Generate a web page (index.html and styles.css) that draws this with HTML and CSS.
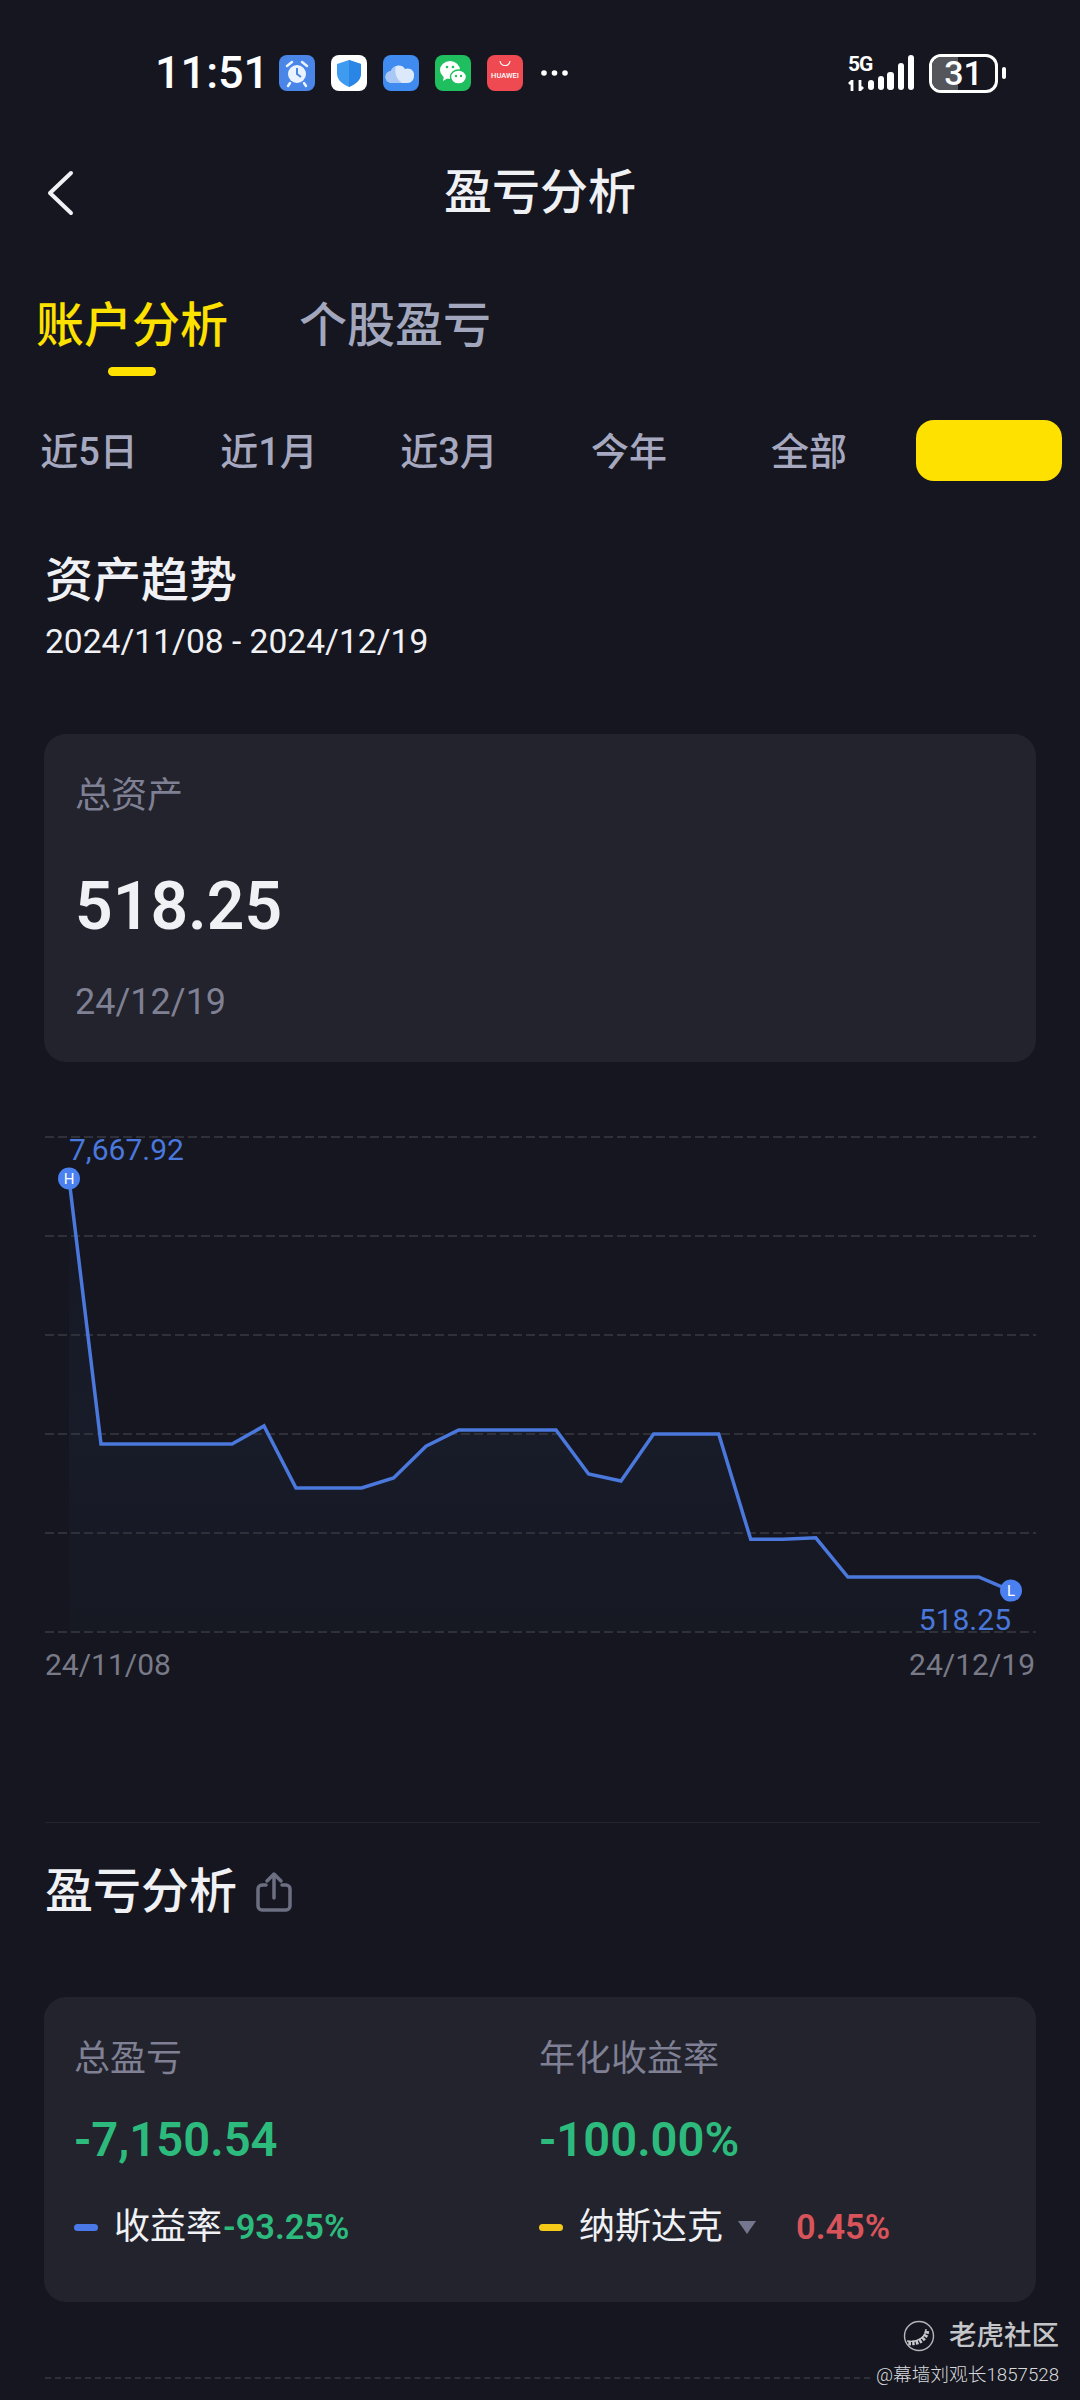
FILE: index.html
```html
<!DOCTYPE html>
<html lang="zh-CN">
<head>
<meta charset="utf-8">
<title>盈亏分析</title>
<link rel="stylesheet" href="styles.css">
</head>
<body>
<div class="page">
  <div class="status">
    <span class="time">11:51</span>
    <div class="notif">
      <svg class="app" viewBox="0 0 36 36"><rect width="36" height="36" rx="8" fill="#4a86e8"/><circle cx="18" cy="19" r="9" fill="#eaf2ff"/><path d="M18 13v6l4 3" fill="none" stroke="#4a86e8" stroke-width="2"/><path d="M8 11l5-4M28 11l-5-4M11 28l-2 3M25 28l2 3" stroke="#eaf2ff" stroke-width="2.5" stroke-linecap="round"/></svg>
      <svg class="app" viewBox="0 0 36 36"><rect width="36" height="36" rx="8" fill="#fff"/><path d="M18 5l12 4v9c0 7-5 11-12 14C11 29 6 25 6 18V9z" fill="#3f9bf0"/><path d="M18 5l12 4v9c0 7-5 11-12 14z" fill="#2a86e6"/></svg>
      <svg class="app" viewBox="0 0 36 36"><rect width="36" height="36" rx="8" fill="#3f8bf0"/><path d="M9 28a6 6 0 0 1-1-12c2-6 11-8 14-2 5-2 10 2 9 7 0 4-3 7-6 7z" fill="#dce9fb"/><path d="M9 28a6 6 0 0 1-1-12c1-3 3-4 5-5-2 6 0 13 6 17z" fill="#a9c8f5"/></svg>
      <svg class="app" viewBox="0 0 36 36"><rect width="36" height="36" rx="8" fill="#1fbf5f"/><ellipse cx="15" cy="15" rx="10" ry="9" fill="#fff"/><path d="M9 21l-1 5 5-3z" fill="#fff"/><ellipse cx="23.500" cy="22" rx="8" ry="7" fill="#fff" stroke="#1fbf5f" stroke-width="1.500"/><circle cx="12" cy="12" r="1.300" fill="#1fbf5f"/><circle cx="18" cy="12" r="1.300" fill="#1fbf5f"/><circle cx="21" cy="21" r="1.200" fill="#1fbf5f"/><circle cx="26" cy="21" r="1.200" fill="#1fbf5f"/></svg>
      <svg class="app" viewBox="0 0 36 36"><rect width="36" height="36" rx="8" fill="#ef4a52"/><path d="M13 6c1 6 9 6 10 0" fill="none" stroke="#fff" stroke-width="1.200"/><text class="hw" x="18" y="23" text-anchor="middle">HUAWEI</text></svg>
      <svg class="dots" viewBox="0 0 27 6"><circle cx="3" cy="3" r="2.800" fill="#fff"/><circle cx="13.500" cy="3" r="2.800" fill="#fff"/><circle cx="24" cy="3" r="2.800" fill="#fff"/></svg>
    </div>
    <div class="sys">
      <div class="net">
        <span class="g5">5G</span>
        <svg class="arrows" viewBox="0 0 17 11"><path d="M4 11V1L1 4M12 0v10l3-3" fill="none" stroke="#fff" stroke-width="2.800"/></svg>
      </div>
      <svg class="bars" viewBox="0 0 46 36"><rect x="0" y="25" width="6" height="10" rx="3" fill="#fff"/><rect x="10" y="21" width="6" height="14" rx="3" fill="#fff"/><rect x="19" y="17" width="7" height="18" rx="3" fill="#fff"/><rect x="30" y="8" width="6" height="27" rx="3" fill="#fff"/><rect x="40" y="0" width="6" height="35" rx="3" fill="#fff"/></svg>
      <div class="batt"><span class="batt-fill"></span><span class="batt-num">31</span></div>
      <span class="nub"></span>
    </div>
  </div>

  <div class="nav">
    <svg class="back" viewBox="0 0 30 46"><path d="M26 3L5 23l21 20" fill="none" stroke="#f0f1f5" stroke-width="4" stroke-linecap="round" stroke-linejoin="round"/></svg>
    <span class="nav-title">盈亏分析</span>
  </div>

  <div class="tabs">
    <div class="tab tab-on">账户分析<span class="tab-bar"></span></div>
    <div class="tab">个股盈亏</div>
  </div>

  <div class="periods">
    <span class="period">近5日</span>
    <span class="period">近1月</span>
    <span class="period">近3月</span>
    <span class="period">今年</span>
    <span class="period">全部</span>
    <span class="period"><span class="chip"></span></span>
  </div>

  <h2 class="h-trend">资产趋势</h2>
  <div class="range">2024/11/08 - 2024/12/19</div>

  <div class="card asset">
    <div class="label">总资产</div>
    <div class="asset-val">518.25</div>
    <div class="asset-date">24/12/19</div>
  </div>

  <svg class="chart" viewBox="0 1120 1080 527">
    <defs>
      <linearGradient id="fill" x1="0" y1="0" x2="0" y2="1">
        <stop offset="0" stop-color="#1a2238" stop-opacity=".1"/>
        <stop offset=".55" stop-color="#1a2030" stop-opacity=".6"/>
        <stop offset="1" stop-color="#171a25" stop-opacity=".5"/>
      </linearGradient>
    </defs>
    <path d="M69 1178.500L101 1444H232L264 1426L296 1488H361.600L393.600 1478L426 1446.300L458.700 1430H556L588.600 1474L621 1481L653.600 1434H718.700L750.700 1539.300H783L815.800 1537.800L847.900 1577H978.700L1010.700 1590.600V1632H69Z" fill="url(#fill)"/>
    <g class="grid">
      <line x1="45" y1="1137" x2="1036" y2="1137"/>
      <line x1="45" y1="1236" x2="1036" y2="1236"/>
      <line x1="45" y1="1335" x2="1036" y2="1335"/>
      <line x1="45" y1="1434" x2="1036" y2="1434"/>
      <line x1="45" y1="1533" x2="1036" y2="1533"/>
      <line x1="45" y1="1632" x2="1036" y2="1632"/>
    </g>
    <path d="M69 1178.500L101 1444H232L264 1426L296 1488H361.600L393.600 1478L426 1446.300L458.700 1430H556L588.600 1474L621 1481L653.600 1434H718.700L750.700 1539.300H783L815.800 1537.800L847.900 1577H978.700L1010.700 1590.600" fill="none" stroke="#4a78dc" stroke-width="3.500"/>
    <text class="peak" x="69" y="1160">7,667.92</text>
    <text class="peak" x="1011" y="1630" text-anchor="end">518.25</text>
    <circle cx="69" cy="1178.500" r="11" fill="#4a80f0"/>
    <text class="mark" x="69" y="1184" text-anchor="middle">H</text>
    <circle cx="1011" cy="1590.600" r="11" fill="#4a80f0"/>
    <text class="mark" x="1011" y="1596" text-anchor="middle">L</text>
  </svg>

  <div class="axis"><span>24/11/08</span><span>24/12/19</span></div>

  <div class="rule"></div>

  <div class="h-pl">
    <h2 class="h-pl-text">盈亏分析</h2>
    <svg class="share" viewBox="0 0 38 42"><path d="M11 14H7a4 4 0 0 0-4 4v17a4 4 0 0 0 4 4h24a4 4 0 0 0 4-4V18a4 4 0 0 0-4-4h-4" fill="none" stroke="#6c6e82" stroke-width="3.500" stroke-linecap="round"/><path d="M19 27V3M12 10l7-7 7 7" fill="none" stroke="#6c6e82" stroke-width="3.500" stroke-linecap="round" stroke-linejoin="round"/></svg>
  </div>

  <div class="card pl">
    <div class="pl-col">
      <div class="label">总盈亏</div>
      <div class="pl-val">-7,150.54</div>
      <div class="legend"><span class="dash dash-blue"></span><span class="lg-name">收益率</span><span class="lg-green">-93.25%</span></div>
    </div>
    <div class="pl-col">
      <div class="label">年化收益率</div>
      <div class="pl-val">-100.00%</div>
      <div class="legend"><span class="dash dash-yellow"></span><span class="lg-name">纳斯达克</span><span class="tri"></span><span class="lg-red">0.45%</span></div>
    </div>
  </div>

  <div class="rule-dash"></div>

  <div class="wm">
    <div class="wm-top">
      <svg class="wm-logo" viewBox="0 0 32 32"><circle cx="16" cy="16" r="14.500" fill="none" stroke="#b5b6ba" stroke-width="1.400"/><path d="M23 9c0 7-7 14-19 12" fill="none" stroke="#c8c8cc" stroke-width="1.400"/><path d="M24 11c-1 8-8 13-19 12" fill="none" stroke="#c8c8cc" stroke-width="4.500" stroke-dasharray="2.500 1.200"/></svg>
      <span class="wm-name">老虎社区</span>
    </div>
    <div class="wm-user">@幕墙刘观长1857528</div>
  </div>
</div>
</body>
</html>
```

FILE: styles.css
```css
* { box-sizing: border-box; }
html, body { margin: 0; padding: 0; background: #15161f; }
body { font-family: Roboto, "Noto Sans CJK SC", sans-serif; color: #f0f1f5; }
h2 { margin: 0; font-weight: 500; }

.page { position: relative; width: 1080px; height: 2400px; overflow: hidden; background: #15161f; }

/* status bar */
.status { height: 146px; display: flex; align-items: center; padding-left: 155px; }
.time { width: 124px; font-size: 45px; line-height: 50px; font-weight: 500; color: #fff; }
.notif { display: flex; align-items: center; gap: 16px; }
.app { width: 36px; height: 36px; display: block; }
.hw { font: 500 7.5px Roboto, sans-serif; fill: #fff; }
.dots { width: 27px; height: 6px; margin-left: 2px; display: block; }
.sys { display: flex; align-items: center; margin-left: 280px; }
.net { width: 20px; display: flex; flex-direction: column; align-items: flex-start; gap: 7px; }
.g5 { font-size: 21px; line-height: 17px; font-weight: 700; color: #fff; letter-spacing: -1px; white-space: nowrap; }
.arrows { width: 17px; height: 11px; display: block; }
.bars { width: 46px; height: 36px; display: block; }
.batt { position: relative; width: 69px; height: 39px; margin-left: 15px; border: 3px solid #fff; border-radius: 12px; overflow: hidden; display: flex; align-items: center; justify-content: center; }
.batt-fill { position: absolute; left: 0; top: 0; bottom: 0; width: 26px; background: #55565c; }
.batt-num { position: relative; font-size: 34px; line-height: 33px; font-weight: 500; color: #fff; }
.nub { width: 4px; height: 12px; margin-left: 4px; background: #fff; border-radius: 2px; }

/* nav */
.nav { position: relative; height: 94px; display: flex; align-items: center; justify-content: center; }
.back { position: absolute; left: 45px; top: 24px; width: 30px; height: 46px; }
.nav-title { font-size: 48px; line-height: 66px; font-weight: 500; }

/* tabs */
.tabs { display: flex; gap: 71px; padding-left: 36px; }
.tab { position: relative; font-size: 48px; line-height: 66px; padding-top: 53px; height: 136px; font-weight: 500; color: #a3a7bd; }
.tab-on { color: #ffe100; }
.tab-bar { position: absolute; left: 72px; top: 127px; width: 48px; height: 9px; border-radius: 5px; background: #ffe100; }

/* periods */
.periods { display: grid; grid-template-columns: repeat(6, 180px); margin: 44px 0 0 -1px; height: 61px; }
.period { display: flex; align-items: center; justify-content: center; padding-top: 3px; font-size: 38px; line-height: 58px; font-weight: 500; color: #a5a8bf; }
.chip { width: 146px; height: 61px; margin-top: -3px; border-radius: 18px; background: #ffe100; }

/* trend */
.h-trend { margin: 67px 0 0 45px; font-size: 48px; line-height: 66px; }
.range { margin: 8px 0 0 45px; font-size: 33.6px; line-height: 40px; color: #f0f1f5; }

.card { margin: 0 44px; background: #22232c; border-radius: 22px; }
.asset { margin-top: 72px; height: 328px; padding: 41px 0 0 31px; }
.label { font-size: 36px; line-height: 42px; color: #7f8094; }
.asset-val { margin-top: 50px; font-size: 66px; line-height: 80px; font-weight: 600; color: #f0f1f5; }
.asset-date { margin-top: 34px; font-size: 36px; line-height: 42px; color: #7f8094; }

/* chart */
.chart { display: block; width: 1080px; height: 527px; margin-top: 58px; }
.grid line { stroke: #383a42; stroke-width: 1.500; stroke-dasharray: 9 4; }
.peak { font: 400 30px Roboto, sans-serif; fill: #4a78dc; }
.mark { font: 400 15px Roboto, sans-serif; fill: #fff; }
.axis { display: flex; justify-content: space-between; padding: 0 45px; font-size: 30px; line-height: 36px; color: #797a88; }

.rule { height: 1px; margin: 139px 40px 0 45px; background: #24262f; }

.h-pl { display: flex; align-items: center; gap: 18px; margin: 36px 0 0 45px; }
.h-pl-text { font-size: 48px; line-height: 66px; }
.share { width: 38px; height: 42px; display: block; }

/* p/l card */
.pl { margin-top: 72px; height: 305px; padding: 41px 0 0 30px; display: grid; grid-template-columns: 465px 1fr; }
.pl-val { margin-top: 30px; font-size: 47.2px; line-height: 60px; font-weight: 600; color: #2cbb7d; }
.legend { margin-top: 35px; display: flex; align-items: center; height: 44px; font-size: 36px; line-height: 44px; }
.dash { width: 24px; height: 7px; border-radius: 4px; margin-right: 16px; }
.dash-blue { background: #4a78e8; }
.dash-yellow { background: #f5c918; }
.lg-name { color: #f0f1f5; }
.lg-green { margin-left: 1px; font-size: 34.4px; font-weight: 600; color: #2cbb7d; }
.tri { width: 0; height: 0; margin: 0 40px 0 15px; border-left: 9px solid transparent; border-right: 9px solid transparent; border-top: 13px solid #75778f; }
.lg-red { font-size: 34.4px; font-weight: 600; color: #d9545a; }

.rule-dash { height: 0; margin: 75px 210px 0 45px; border-top: 2px dashed #2e3038; }

/* watermark */
.wm { position: absolute; right: 21px; top: 2318px; display: flex; flex-direction: column; align-items: flex-end; }
.wm-top { display: flex; align-items: center; gap: 14px; }
.wm-logo { width: 32px; height: 32px; display: block; }
.wm-name { font-size: 27.5px; line-height: 36px; font-weight: 500; color: #c4c5c9; }
.wm-user { margin-top: 9px; font-family: Roboto, "Noto Sans CJK SC", sans-serif; font-size: 18.7px; font-weight: 300; line-height: 24px; color: #d8d9dc; }
```
